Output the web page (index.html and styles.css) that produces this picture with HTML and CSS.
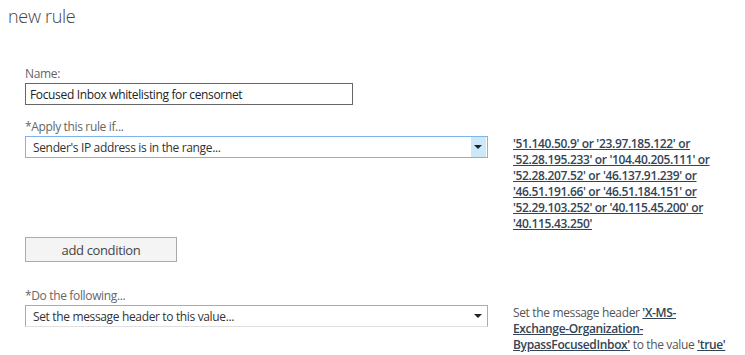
FILE: index.html
```html
<!DOCTYPE html>
<html lang="en">
<head>
    <meta charset="UTF-8">
    <title>new rule</title>
    <link rel="stylesheet" href="styles.css">
</head>
<body>
    <h1 class="title">new rule</h1>

    <div class="rule-form">
        <div class="field name-field">
            <label for="rule-name">Name:</label>
            <input type="text" id="rule-name" value="Focused Inbox whitelisting for censornet">
        </div>

        <div class="field condition-field">
            <label>*Apply this rule if...</label>
            <div class="rule-row">
                <div class="select active">
                    <span class="select-text">Sender's IP address is in the range...</span>
                    <span class="select-arrow"></span>
                </div>
                <div class="rule-desc">
                    <a href="#">'51.140.50.9' or '23.97.185.122' or '52.28.195.233' or '104.40.205.111' or '52.28.207.52' or '46.137.91.239' or '46.51.191.66' or '46.51.184.151' or '52.29.103.252' or '40.115.45.200' or '40.115.43.250'</a>
                </div>
            </div>
            <button type="button" class="add-btn">add condition</button>
        </div>

        <div class="field action-field">
            <label>*Do the following...</label>
            <div class="rule-row">
                <div class="select">
                    <span class="select-text">Set the message header to this value...</span>
                    <span class="select-arrow"></span>
                </div>
                <div class="rule-desc">
                    Set the message header <a href="#">'X-MS-<br>Exchange-Organization-<br>BypassFocusedInbox'</a> to the value <a href="#">'true'</a>
                </div>
            </div>
        </div>
    </div>
</body>
</html>
```

FILE: styles.css
```css
body {
    margin: 0;
    font-family: 'Open Sans', 'Noto Sans', sans-serif;
    font-size: 12px;
    letter-spacing: -0.35px;
    color: #333;
    background: #fff;
}

.title {
    margin: 0;
    padding: 3px 0 0 8px;
    font-size: 18px;
    font-weight: 300;
    letter-spacing: -0.3px;
    color: #444;
    line-height: 26px;
}

.rule-form {
    padding: 37px 0 0 25px;
}

.field label {
    display: block;
    color: #666;
    font-size: 12px;
    line-height: 16px;
    margin-bottom: 1px;
}

.name-field input {
    box-sizing: border-box;
    width: 328px;
    height: 22px;
    padding: 0 4px;
    border: 1px solid #666;
    font-family: inherit;
    font-size: 12px;
    letter-spacing: -0.35px;
    color: #222;
}

.condition-field {
    margin-top: 14px;
}

.action-field {
    margin-top: 26px;
}

.rule-row {
    display: flex;
    gap: 25px;
    align-items: flex-start;
}

.select {
    box-sizing: border-box;
    flex: 0 0 463px;
    height: 22px;
    display: flex;
    align-items: center;
    border: 1px solid #ababab;
    border-bottom-color: #e0e0e0;
    background: #fff;
}

.select.active {
    border-color: #7eb4ea;
}

.select-text {
    flex: 1;
    padding-left: 7px;
    color: #333;
}

.select-arrow {
    position: relative;
    width: 15px;
    align-self: stretch;
    margin-right: 1px;
}

.select.active .select-arrow {
    background: #cde8f8;
}

.select-arrow::after {
    content: "";
    position: absolute;
    left: 3px;
    top: 8px;
    border-left: 4px solid transparent;
    border-right: 4px solid transparent;
    border-top: 4px solid #222;
}

.rule-desc {
    width: 220px;
    line-height: 16px;
    color: #555;
}

.rule-desc a {
    color: #334455;
    font-weight: 600;
    text-decoration: underline;
}

.add-btn {
    display: block;
    box-sizing: border-box;
    width: 152px;
    height: 25px;
    margin-top: 5px;
    border: 1px solid #aaa;
    background: #f4f4f4;
    font-family: inherit;
    font-size: 13px;
    letter-spacing: -0.35px;
    color: #444;
    padding: 0;
}
```
